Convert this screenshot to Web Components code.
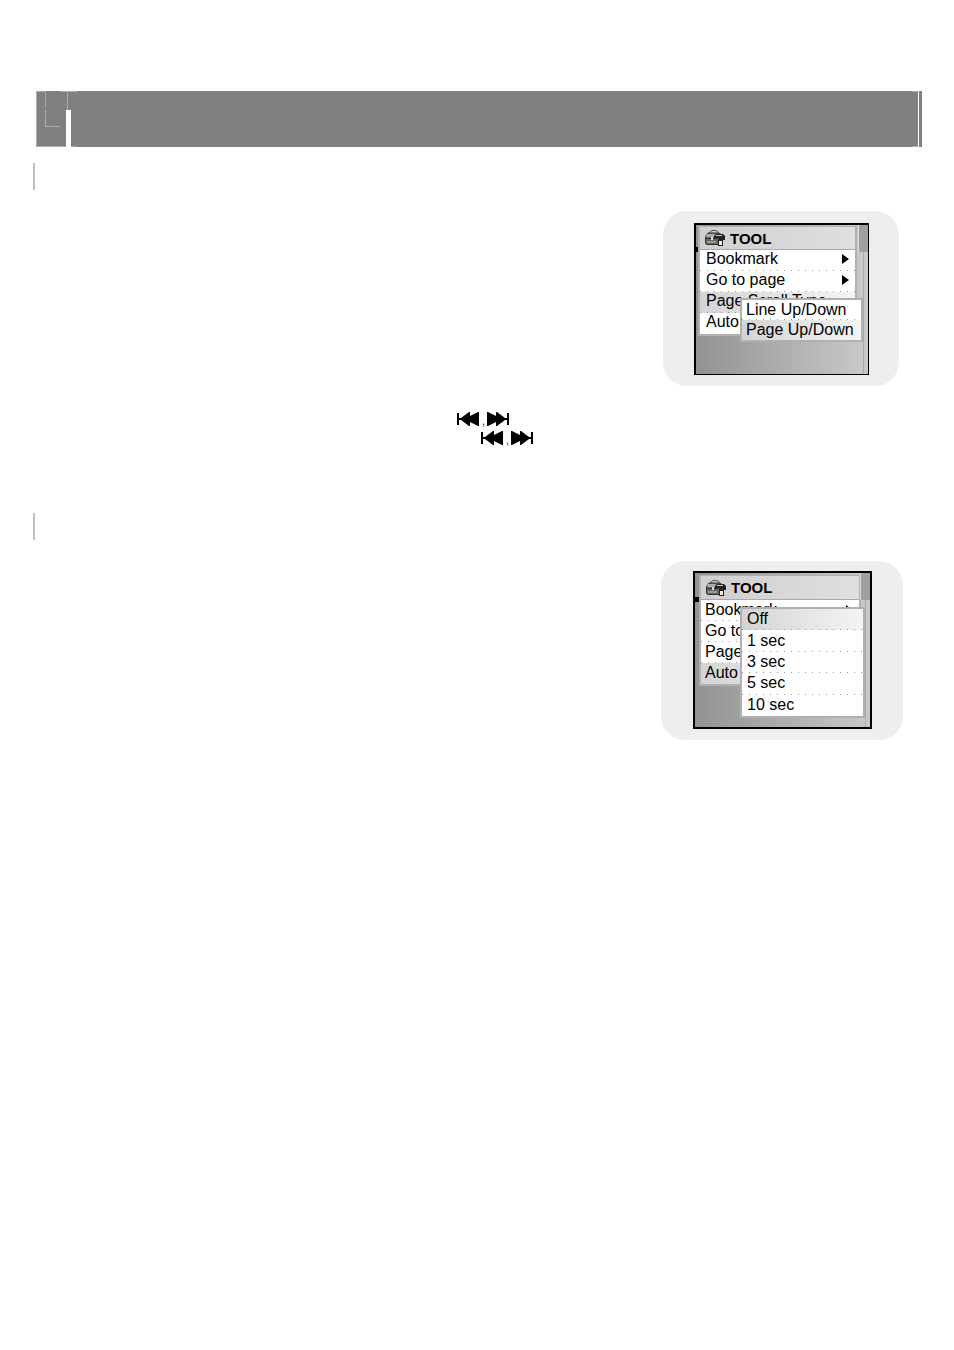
<!DOCTYPE html>
<html lang="en">
<head>
<meta charset="utf-8">
<title>TOOL</title>
<style>
  body {
    margin: 0;
    background: #fff;
    color: #000;
    font-family: "Liberation Sans", Arial, sans-serif;
  }
  main { padding: 91px 32px 48px 33px; }
</style>
</head>
<body>
<main>
  <chapter-bar></chapter-bar>
  <manual-section>
    <device-screen>
      <tool-menu>
        <menu-row arrow>Bookmark</menu-row>
        <menu-row arrow>Go to page</menu-row>
        <menu-row selected>Page Scroll Type</menu-row>
        <menu-row>Auto</menu-row>
      </tool-menu>
      <sub-menu slot="popup">
        <menu-row>Line Up/Down</menu-row>
        <menu-row selected>Page Up/Down</menu-row>
      </sub-menu>
    </device-screen>
    <skip-keys slot="notes"></skip-keys>
    <skip-keys slot="notes" indent></skip-keys>
  </manual-section>
  <manual-section>
    <device-screen large>
      <tool-menu>
        <menu-row arrow>Bookmark</menu-row>
        <menu-row>Go to</menu-row>
        <menu-row>Page</menu-row>
        <menu-row selected>Auto</menu-row>
      </tool-menu>
      <sub-menu slot="popup">
        <menu-row selected>Off</menu-row>
        <menu-row>1 sec</menu-row>
        <menu-row>3 sec</menu-row>
        <menu-row>5 sec</menu-row>
        <menu-row>10 sec</menu-row>
      </sub-menu>
    </device-screen>
  </manual-section>
</main>

<script>
const define = (name, html) => {
  const template = document.createElement('template');
  template.innerHTML = html;
  customElements.define(name, class extends HTMLElement {
    constructor() {
      super();
      this.attachShadow({ mode: 'open' }).appendChild(template.content.cloneNode(true));
    }
  });
};

define('chapter-bar', `
  <style>
    :host { display: flex; height: 56px; margin-left: 3px; }
    svg { display: block; flex: none; }
    .fill { flex: 1; background: #808080; }
  </style>
  <svg width="42" height="56" shape-rendering="crispEdges" aria-hidden="true">
    <path fill="#808080" d="M0 0h42v56H0z"/>
    <path fill="#fff" d="M30 19h5v37h-5z"/>
    <path fill="#aaa" d="M0 0h1v56H0zM0 0h10v1H0zM24 0h17v1H24zM0 55h30v1H0zM35 55h6v1h-6zM9 0h1v17H9zM9 19h1v17H9zM9 35h15v1H9zM31 0h1v19h-1z"/>
  </svg>
  <div class="fill"></div>
  <svg width="10" height="56" shape-rendering="crispEdges" aria-hidden="true">
    <path fill="#808080" d="M0 0h6v56H0zM7 0h3v56H7z"/>
    <path fill="#aaa" d="M0 0h6v1H0zM0 55h6v1H0z"/>
  </svg>
`);

define('manual-section', `
  <style>
    :host { display: block; margin-top: 16px; }
    .title { height: 27px; border-left: 2px solid #c0c0c0; margin-bottom: 21px; }
    .figure { display: flex; justify-content: flex-end; }
    .notes { min-height: 111px; padding-top: 24px; box-sizing: border-box; }
  </style>
  <div class="title"></div>
  <div class="figure"><slot></slot></div>
  <div class="notes"><slot name="notes"></slot></div>
`);

define('device-screen', `
  <style>
    :host {
      --menu-margin: 1px 0 0 2px;
      --menu-width: 159px;
      --head-height: 23px;
      --menu-pad: 6px;
      --menu-lift: 3px;
      --popup-pad: 4px;
      --popup-width: 123px;
      --popup-height: 44px;
      --popup-top: 73px;
      --popup-left: 44px;
      display: block;
      padding: 12px 30px 11px 31px;
      margin-right: 23px;
      border-radius: 24px;
      background: #eee;
    }
    :host([large]) {
      --menu-margin: 2px 0 0 4px;
      --menu-width: 162px;
      --head-height: 24px;
      --menu-pad: 4px;
      --menu-lift: 1px;
      --popup-pad: 5px;
      --popup-width: 125px;
      --popup-height: 111px;
      --popup-top: 34px;
      --popup-left: 45px;
      padding: 10px 31px 11px 32px;
      margin-right: 19px;
    }
    .screen {
      position: relative;
      box-sizing: border-box;
      width: 175px;
      height: 152px;
      border: solid #000;
      border-width: 2px 1px 1px 2px;
      background: linear-gradient(90deg, #929292, #cacaca);
    }
    :host([large]) .screen { width: 179px; height: 158px; border-width: 2px; }
    .track {
      position: absolute;
      top: 0;
      right: 0;
      bottom: 0;
      width: 4px;
      border-left: 1px solid #aaa;
      background: #c8c8c8;
    }
    .thumb {
      position: absolute;
      top: 0;
      right: 0;
      width: 9px;
      height: 27px;
      border-left: 1px solid #ddd;
      background: #a0a0a0;
    }
    .tick {
      position: absolute;
      top: 22px;
      left: -2px;
      width: 4px;
      height: 5px;
      background: #000;
    }
    :host([large]) .tick { top: 24px; width: 6px; }
  </style>
  <div class="screen">
    <div class="track"></div>
    <div class="thumb"></div>
    <div class="tick"></div>
    <slot></slot>
    <slot name="popup"></slot>
  </div>
`);

define('tool-menu', `
  <style>
    :host {
      --row-pad: var(--menu-pad);
      --row-lift: var(--menu-lift);
      display: block;
      box-sizing: border-box;
      width: var(--menu-width);
      margin: var(--menu-margin);
      border: solid #b0b0b0;
      border-width: 1px 2px 2px;
      background: #fff;
    }
    .head {
      display: flex;
      align-items: center;
      gap: 4px;
      box-sizing: border-box;
      height: var(--head-height);
      padding-left: 4px;
      border-bottom: 1px solid #aaa;
      background: linear-gradient(90deg, #cfcfcf, #dfdfdf);
      font-size: 15px;
      font-weight: bold;
    }
    svg { display: block; }
  </style>
  <div class="head">
    <svg width="22" height="18" viewBox="0 0 22 18" aria-hidden="true">
      <path fill="none" stroke="#555" d="M6 4V3l2-1.500h4L14 3v1"/>
      <path fill="#666" stroke="#333" d="M3 5.500L4 4h11l2 1.500.5 2v7l-2 1h-13l-1-1v-7z"/>
      <path fill="#aaa" d="M3 5h11v3H2z"/>
      <path stroke="#333" d="M1 9.500h12"/>
      <path fill="#999" d="M3 12h9v2H3z"/>
      <path fill="#ddd" d="M7 8h2v3H7z"/>
      <path fill="#222" d="M10 7l2-2h7l2 2v4h-2V9h-7l-2 1z"/>
      <path fill="#ccc" d="M12 6h6v1h-6z"/>
      <path fill="#222" d="M14 9h5v8h-5z"/>
      <path fill="#eee" d="M15 12h3v4h-3z"/>
    </svg>
    <span>TOOL</span>
  </div>
  <slot></slot>
`);

define('sub-menu', `
  <style>
    :host {
      display: flex;
      flex-direction: column;
      position: absolute;
      top: var(--popup-top);
      left: var(--popup-left);
      box-sizing: border-box;
      width: var(--popup-width);
      height: var(--popup-height);
      border: 2px solid #b0b0b0;
      background: #fff;
      --row-height: 20px;
      --row-pad: var(--popup-pad);
      --row-lift: 1px;
    }
    ::slotted(*) { flex: 1; }
  </style>
  <slot></slot>
`);

define('menu-row', `
  <style>
    :host { display: flex; min-height: var(--row-height, 21px); }
    button {
      display: flex;
      flex: 1;
      align-items: center;
      justify-content: space-between;
      min-width: 0;
      margin: 0;
      padding: 0 6px var(--row-lift) var(--row-pad);
      border: 0;
      background: linear-gradient(90deg, #999 1px, transparent 1px) 0 100% / 7px 1px repeat-x;
      color: inherit;
      font: 16px/16px "Liberation Sans", Arial, sans-serif;
      text-align: left;
      white-space: nowrap;
    }
    :host([selected]) button {
      background:
        linear-gradient(90deg, #999 1px, transparent 1px) 0 100% / 7px 1px repeat-x,
        linear-gradient(90deg, #d4d4d4, #f4f4f4);
    }
    :host(:last-child) button { background: none; }
    :host([selected]:last-child) button { background: linear-gradient(90deg, #d4d4d4, #f4f4f4); }
    svg { display: none; }
    :host([arrow]) svg { display: block; }
  </style>
  <button type="button"><slot></slot>
    <svg width="7" height="10" viewBox="0 0 7 10" aria-hidden="true"><path d="M0 0l7 5-7 5z"/></svg>
  </button>
`);

define('skip-keys', `
  <style>
    :host { display: flex; height: 19px; padding-left: 424px; }
    :host([indent]) { padding-left: 448px; }
    svg { display: block; margin-top: 2px; }
    span { width: 7px; color: #666; font-size: 14px; line-height: 20px; text-align: center; }
  </style>
  <svg width="23" height="14" viewBox="0 0 23 14" role="img" aria-label="Previous">
    <path d="M0 1h2v5h2l8-6h1v4l8-4h1v14h-1l-8-4v4h-1L4 8H2v5H0z"/>
  </svg>
  <span>,</span>
  <svg width="23" height="14" viewBox="0 0 23 14" role="img" aria-label="Next">
    <path d="M22 1h-2v5h-2l-8-6H9v4L1 0H0v14h1l8-4v4h1l8-6h2v5h2z"/>
  </svg>
`);
</script>
</body>
</html>
